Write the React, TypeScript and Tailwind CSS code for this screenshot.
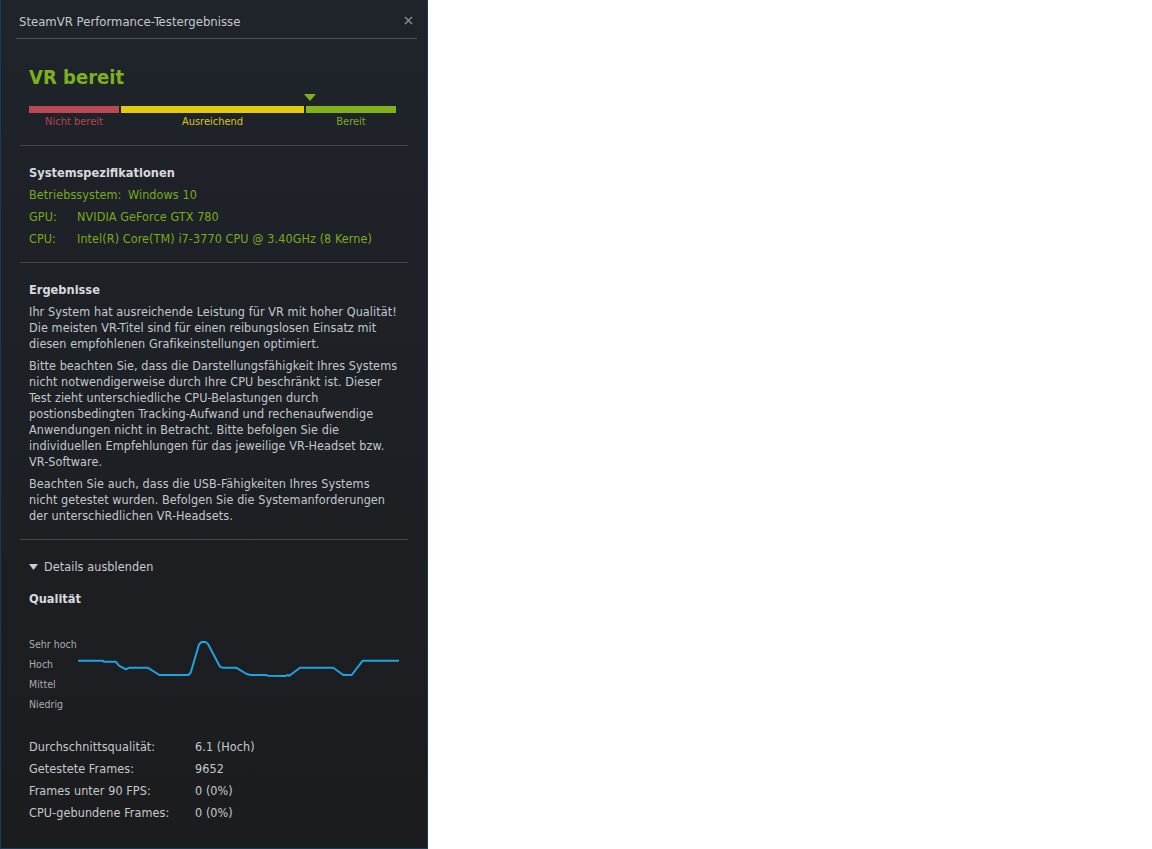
import React from 'react';

const font = { fontFamily: '"DejaVu Sans Condensed", "Liberation Sans", sans-serif' };

// quality samples of the run, in chart coordinates (x: px across, y: px down)
const qualityPoints: [number, number][] = [
  [0, 26.7], [25, 26.7], [26, 27.7], [37.7, 27.7], [41, 31.7], [48, 35.3], [51.3, 33.7],
  [69.7, 33.7], [81.3, 41], [110.3, 41], [112.7, 38.7], [117, 24], [121, 10.5], [123.5, 8],
  [127.5, 8], [130, 10], [142, 32.7], [144.3, 33.7], [158, 33.7], [168.7, 40], [172.7, 41],
  [188, 41], [189.7, 41.7], [207.7, 42], [209.3, 41], [211.3, 41.7], [222, 33.7],
  [255.3, 33.7], [265.3, 41], [273.7, 41], [284.7, 26.7], [321, 26.7],
];

const specs = [
  { label: 'GPU:', value: 'NVIDIA GeForce GTX 780' },
  { label: 'CPU:', value: 'Intel(R) Core(TM) i7-3770 CPU @ 3.40GHz (8 Kerne)' },
];

const stats = [
  { label: 'Durchschnittsqualität:', value: '6.1 (Hoch)' },
  { label: 'Getestete Frames:', value: '9652' },
  { label: 'Frames unter 90 FPS:', value: '0 (0%)' },
  { label: 'CPU-gebundene Frames:', value: '0 (0%)' },
];

const levels = ['Sehr hoch', 'Hoch', 'Mittel', 'Niedrig'];

const Divider = () => <div className="ml-[19px] mr-[19px] h-px bg-[#44484d]" />;

export default function App() {
  const path = qualityPoints.map(([x, y], i) => `${i === 0 ? 'M' : 'L'}${x} ${y}`).join(' ');

  return (
    <div className="min-h-[849px] bg-white" style={font}>
      <div className="flex h-[849px] w-[428px] flex-col border-x border-b border-[#1b3958] bg-gradient-to-b from-[#1f242b] to-[#1b1c1e] text-[12.5px] tracking-[0.08px] text-[#c3c8cd]">
        {/* Title bar */}
        <div className="flex h-[38px] items-start justify-between pl-[18px] pr-[14px] pt-[14px]">
          <span className="text-[13px] leading-[16px] tracking-normal text-[#c4c8cc]">SteamVR Performance-Testergebnisse</span>
          <svg width="9" height="9" viewBox="0 0 9 9" className="mt-[2px]">
            <path d="M1 1L8 8M8 1L1 8" stroke="#8b8f94" strokeWidth="1.4" />
          </svg>
        </div>
        <div className="ml-[15px] mr-[10px] h-px bg-[#4d5156]" />

        {/* Readiness */}
        <div className="px-[28px] pb-[16px]">
          <div className="mt-[26px] text-[20px] font-bold leading-[24px] tracking-normal text-[#7db21c]">VR bereit</div>
          <div className="relative w-[367px] pt-[17px]">
            <svg width="12" height="7" viewBox="0 0 12 7" className="absolute left-[275px] top-[5px]">
              <path d="M0 0H12L6 7Z" fill="#7db21c" />
            </svg>
            <div className="flex h-[7px] gap-[2px]">
              <div className="w-[90px] bg-[#b94a55]" />
              <div className="w-[183px] bg-[#e3ca12]" />
              <div className="w-[90px] bg-[#80b31b]" />
            </div>
            <div className="mt-[2px] flex gap-[2px] text-[11px] leading-[14px] tracking-normal">
              <div className="w-[90px] text-center text-[#b8454f]">Nicht bereit</div>
              <div className="w-[183px] text-center text-[#d9c31a]">Ausreichend</div>
              <div className="w-[90px] text-center text-[#7aaa1c]">Bereit</div>
            </div>
          </div>
        </div>
        <Divider />

        {/* System specs */}
        <div className="px-[28px] pb-[12px]">
          <div className="mt-[19px] text-[12.7px] font-bold leading-[16px] tracking-normal text-[#d6dade]">Systemspezifikationen</div>
          <div className="mt-[3px] leading-[22px] text-[#78ab1b]">
            <div>
              Betriebssystem: <span className="ml-[3px]">Windows 10</span>
            </div>
            {specs.map(s => (
              <div key={s.label} className="flex">
                <span className="w-[48px]">{s.label}</span>
                <span>{s.value}</span>
              </div>
            ))}
          </div>
        </div>
        <Divider />

        {/* Results */}
        <div className="px-[28px] pb-[15px] leading-[16px]">
          <div className="mt-[19px] text-[12.7px] font-bold tracking-normal text-[#d6dade]">Ergebnisse</div>
          <p className="mt-[6px]">
            Ihr System hat ausreichende Leistung für VR mit hoher Qualität! Die meisten VR-Titel sind für einen
            reibungslosen Einsatz mit diesen empfohlenen Grafikeinstellungen optimiert.
          </p>
          <p className="mt-[6px]">
            Bitte beachten Sie, dass die Darstellungsfähigkeit Ihres Systems nicht notwendigerweise durch Ihre CPU
            beschränkt ist. Dieser Test zieht unterschiedliche CPU-Belastungen durch postionsbedingten
            Tracking-Aufwand und rechenaufwendige Anwendungen nicht in Betracht. Bitte befolgen Sie die
            individuellen Empfehlungen für das jeweilige VR-Headset bzw. VR-Software.
          </p>
          <p className="mt-[6px]">
            Beachten Sie auch, dass die USB-Fähigkeiten Ihres Systems nicht getestet wurden. Befolgen Sie die
            Systemanforderungen der unterschiedlichen VR-Headsets.
          </p>
        </div>
        <Divider />

        {/* Details */}
        <div className="px-[28px]">
          <div className="mt-[19px] flex items-center gap-[6px] leading-[16px] text-[#c8ccd0]">
            <svg width="9" height="6" viewBox="0 0 9 6">
              <path d="M0 0H9L4.5 6Z" fill="#c8ccd0" />
            </svg>
            <span>Details ausblenden</span>
          </div>
          <div className="mt-[16px] text-[12.7px] font-bold leading-[16px] tracking-normal text-[#d6dade]">Qualität</div>

          <div className="mt-[27px] flex">
            <div className="w-[49px] shrink-0 text-[10.5px] leading-[20px] tracking-normal text-[#a9adb2]">
              {levels.map(l => (
                <div key={l} className="whitespace-nowrap">{l}</div>
              ))}
            </div>
            <svg width="321" height="80" viewBox="0 0 321 80" className="shrink-0 overflow-visible">
              <path d={path} fill="none" stroke="#1ea4e2" strokeWidth="2" strokeLinejoin="round" />
            </svg>
          </div>

          <div className="mt-[22px] leading-[22px] text-[#c6c9cc]">
            {stats.map(s => (
              <div key={s.label} className="flex">
                <span className="w-[166px]">{s.label}</span>
                <span>{s.value}</span>
              </div>
            ))}
          </div>
        </div>
      </div>
    </div>
  );
}
